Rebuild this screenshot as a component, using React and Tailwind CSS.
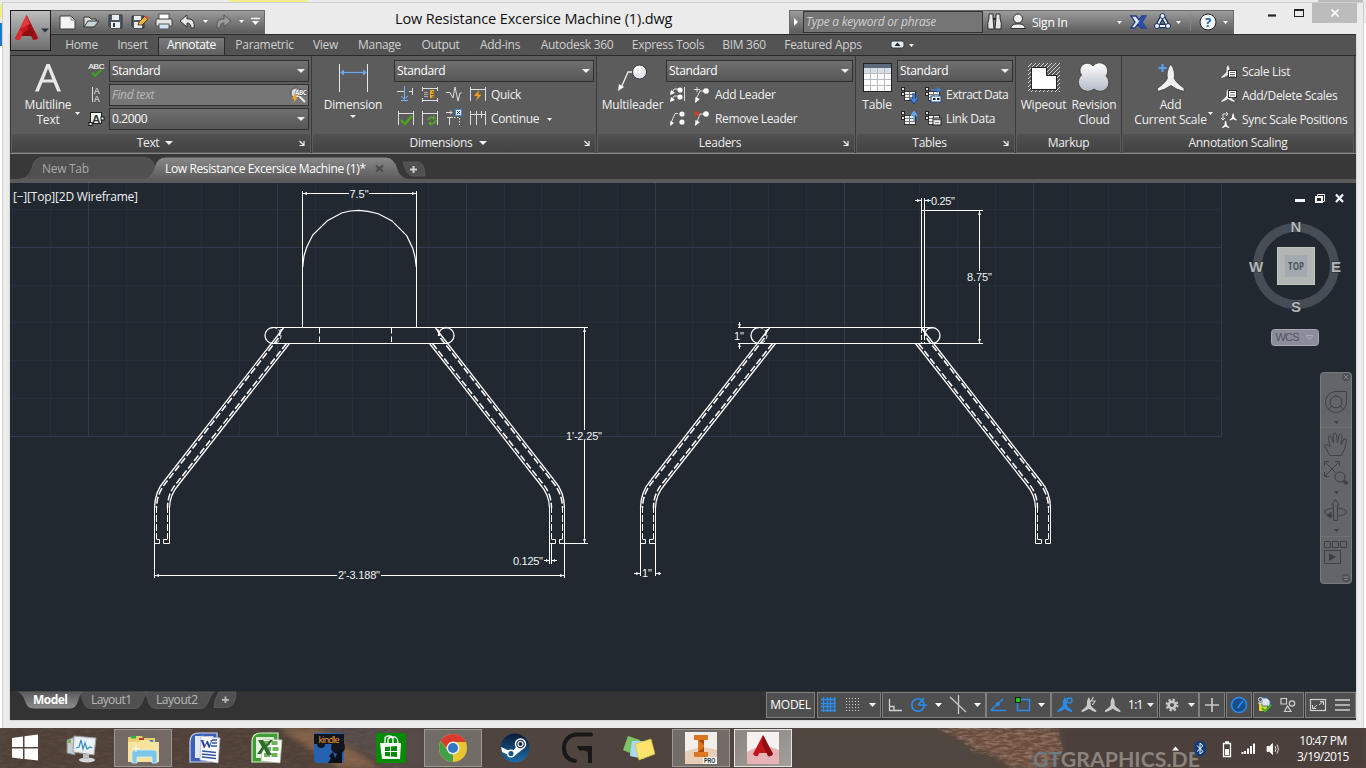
import React from "react";

function Svg({ w, h, className = "", children, vb }) {
  return (
    <svg width={w} height={h} viewBox={vb || `0 0 ${w} ${h}`} fill="none" className={"shrink-0 " + className}>
      {children}
    </svg>
  );
}

function Caret({ c = "#f0f0f0", w = 7, h = 4, className = "" }) {
  return (
    <Svg w={w} h={h} className={className}>
      <path d={`M0 0H${w}L${w / 2} ${h}Z`} fill={c} />
    </Svg>
  );
}

/* ---------- title bar ---------- */

function AppButton() {
  return (
    <div className="relative z-10 flex h-[41px] w-[41px] shrink-0 items-center border border-[#1c1c1c] bg-gradient-to-b from-[#bdbdbd] to-[#6e6e6e]">
      <Svg w={39} h={39}>
        <path d="M15.500 4L4 27.500Q6 29.500 9 28.500L11 24.500H20L22 28.500Q25 29.500 27 27Z" fill="#c8191e" />
        <path d="M15.500 4L27 27Q25 29.500 22 28.500L17 18Z" fill="#a01015" />
        <path d="M15.500 4L9 18L19 13Z" fill="#e2383a" />
        <path d="M10 23L20 17L23 25H11Z" fill="#8e0d12" />
        <path d="M4 27.500L9 19L12 22L9 28.500Q6 29.500 4 27.500Z" fill="#dc2a2e" />
        <path d="M30 17.500H38L34 21.500Z" fill="#2a3440" />
      </Svg>
    </div>
  );
}

function QuickAccess() {
  return (
    <div className="flex h-6 w-[214px] items-center border border-l-0 border-[#6a6a6a] bg-gradient-to-b from-[#9c9c9c] to-[#5c5c5c]">
      <Svg w={212} h={22}>
        <path d="M9 5H20L24 9V18H9Z" fill="#f4f4f4" stroke="#3b3b3b" />
        <path d="M20 5V9H24" stroke="#777" />
        <path d="M33 16V6H38L40 8H45V10" fill="#ddd" stroke="#333" />
        <path d="M33 16L37 10H48L43 16Z" fill="#c9d3da" stroke="#333" />
        <path d="M58 4H71V17H60L58 15Z" fill="#4d5a66" stroke="#333" />
        <rect x="61" y="4" width="7" height="5" fill="#e9edf0" />
        <rect x="60" y="11" width="9" height="6" fill="#e9edf0" />
        <rect x="62" y="12" width="2" height="4" fill="#333" />
        <path d="M81 5H93V17H83L81 15Z" fill="#4d5a66" stroke="#333" />
        <rect x="83" y="5" width="7" height="4" fill="#e9edf0" />
        <rect x="83" y="11" width="8" height="6" fill="#e9edf0" />
        <path d="M87 14L88 11L94 5L97 8L91 14Z" fill="#f1b53b" stroke="#3b2a10" strokeWidth=".8" />
        <path d="M94 5L97 8" stroke="#d8442c" strokeWidth="2" />
        <rect x="108" y="3" width="10" height="6" fill="#fff" stroke="#555" />
        <rect x="105" y="8" width="16" height="7" rx="1" fill="#e5e5e5" stroke="#444" />
        <rect x="108" y="13" width="10" height="5" fill="#cfe3f8" stroke="#555" />
        <path d="M129 10L136 4V8H139Q144 9 143 17H140Q140 12 136 12V16Z" fill="#e8e8e8" stroke="#333" />
        <path d="M152 9H157L154.500 12Z" fill="#fff" />
        <path d="M180 10L173 4V8H170Q165 9 166 17H169Q169 12 173 12V16Z" fill="#9a9a9a" stroke="#555" />
        <path d="M188 9H193L190.500 12Z" fill="#fff" />
        <path d="M200 7.500H209" stroke="#fff" strokeWidth="1.500" />
        <path d="M201 10H208L204.500 14Z" fill="#fff" />
      </Svg>
    </div>
  );
}

function InfoCenter() {
  return (
    <div className="flex h-6 w-[445px] items-center border border-[#6a6a6a] bg-gradient-to-b from-[#9c9c9c] to-[#5c5c5c]">
      <Svg w={13} h={22}><path d="M4 7L8 11L4 15Z" fill="#fff" /></Svg>
      <div className="flex h-[22px] w-[180px] items-center border border-[#333] bg-[#757575] pl-[2px] text-[12px] tracking-[-0.25px] text-[#cfcfcf] italic">Type a keyword or phrase</div>
      <Svg w={48} h={22} className="ml-[3px]">
        <path d="M3 3H7V7L8 18H2Q1 12 3 7Z" fill="#e8e8e8" stroke="#2c2c2c" />
        <path d="M10 3H14V7Q16 12 15 18H9L10 7Z" fill="#e8e8e8" stroke="#2c2c2c" />
        <path d="M7 8H10" stroke="#2c2c2c" strokeWidth="2" />
        <circle cx="32" cy="7.500" r="4.500" fill="#eceef2" stroke="#2c2c2c" />
        <path d="M24.500 17.500Q26 13 30 13H34Q38 13 39.500 17.500Z" fill="#eceef2" stroke="#2c2c2c" />
      </Svg>
      <span className="-ml-[2px] w-[84px] pt-px text-[12px] tracking-[-0.25px] text-white">Sign In</span>
      <Svg w={116} h={22}>
        <path d="M1 10H6L3.500 13Z" fill="#fff" />
        <path d="M15 5H20L23 9L26 5H30L26 11L30 17H25L22 13L19 17H15L19 11Z" fill="#dce6f5" stroke="#203a80" strokeWidth="1.300" />
        <path d="M26 5H30L26 11L30 17H25L22 12Z" fill="#2b4fa8" />
        <path d="M46.500 5L41 15H52Z" stroke="#1c2f66" strokeWidth="4.500" strokeLinejoin="round" />
        <path d="M46.500 5L41 15H52Z" stroke="#eef2fa" strokeWidth="1.800" />
        <g fill="#e8eefc" stroke="#1c2f66"><circle cx="46.500" cy="5" r="2.500" /><circle cx="41" cy="15" r="2.500" /><circle cx="52" cy="15" r="2.500" /></g>
        <path d="M60 10H65L62.500 13Z" fill="#fff" />
        <path d="M74.500 3V20" stroke="#858585" />
        <circle cx="92" cy="11" r="8" fill="#f5f7fb" stroke="#222" />
        <text x="92" y="15.800" textAnchor="middle" fontFamily="Open Sans" fontWeight="700" fontSize="13" fill="#2460b8">?</text>
        <path d="M107 10H112L109.500 13Z" fill="#fff" />
      </Svg>
    </div>
  );
}

function TitleBar() {
  return (
    <div className="flex h-[34px] w-full pt-0 pl-[10px]">
      <div className="mt-[10px] flex">
        <AppButton />
        <QuickAccess />
      </div>
      <div className="mt-[9px] w-[524px] pl-[130px] text-[14.500px] leading-[20px] tracking-[-0.14px] whitespace-nowrap text-[#111]">Low Resistance Excersice Machine (1).dwg</div>
      <div className="mt-[10px]"><InfoCenter /></div>
      <div className="flex h-[23px] flex-1">
        <Svg w={78} h={23}>
          <path d="M34 15.500H42" stroke="#222" strokeWidth="2.200" />
          <rect x="60.500" y="10.500" width="9" height="6" stroke="#222" />
          <path d="M60 10H70" stroke="#222" strokeWidth="2" />
        </Svg>
        <div className="mt-[3px] flex h-5 w-[45px] items-center justify-center bg-[#bcbcbc]">
          <Svg w={8} h={8}><path d="M.5 .5L7.500 7.500M7.500 .5L.5 7.500" stroke="#fff" strokeWidth="1.700" /></Svg>
        </div>
      </div>
    </div>
  );
}

/* ---------- ribbon tabs ---------- */

const TABS = [
  ["Home", "w-[51px]"], ["Insert", "w-[51px]"], ["Annotate", "w-[67px]"], ["Parametric", "w-[79px]"], ["View", "w-[43px]"],
  ["Manage", "w-[65px]"], ["Output", "w-[57px]"], ["Add-ins", "w-[62px]"], ["Autodesk 360", "w-[92px]"],
  ["Express Tools", "w-[90px]"], ["BIM 360", "w-[62px]"], ["Featured Apps", "w-[96px]"],
];

function RibbonTabs() {
  return (
    <div className="flex h-[21px] border-t border-[#2c2c2c] bg-[#535353] pl-[46px] text-[12px] tracking-[-0.3px] text-[#cfcfcf]">
      {TABS.map(([t, w]) => (
        <div key={t} className={`${w} flex shrink-0 justify-center whitespace-nowrap ${t === "Annotate" ? "mt-[2px] h-[19px] border border-b-0 border-[#2a2a2a] bg-gradient-to-b from-[#7a7a7a] to-[#5f5f5f] leading-[14px] text-white" : "leading-[20px]"}`}>{t}</div>
      ))}
      <Svg w={50} h={20} className="ml-[18px]">
        <rect x="2" y="6" width="13" height="7" rx="2" fill="#e8edf2" stroke="#2f3a44" />
        <path d="M5.500 11H11.500L8.500 7.500Z" fill="#222" />
        <path d="M20 9H25L22.500 12Z" fill="#fff" />
      </Svg>
    </div>
  );
}

/* ---------- ribbon panels ---------- */

function Drop({ children, className = "", dim }) {
  return (
    <div className={`flex h-[22px] items-center justify-between border border-[#303030] pl-[2px] text-[12px] tracking-[-0.35px] ${dim ? "bg-[#767676] text-[#b9b9b9] italic" : "bg-gradient-to-b from-[#707070] to-[#575757] pr-[3px] text-white"} ${className}`}>
      <span>{children}</span>
      {dim ? (
        <Svg w={18} h={18}>
          <circle cx="6" cy="7" r="5" fill="#d5dbe2" stroke="#555" />
          <path d="M9 10L15 16" stroke="#eee" strokeWidth="2" />
          <text x="5" y="9" fontSize="6.500" fontFamily="Open Sans" fontWeight="700" fontStyle="normal" textLength="11.500" lengthAdjust="spacingAndGlyphs" fill="#fff" stroke="#444" strokeWidth="1" paintOrder="stroke">ABC</text>
          <path d="M5 8L2 13H4.500L3 17L8 11.500H5.500L7 8Z" fill="#f5a21c" />
        </Svg>
      ) : <Caret w={8} />}
    </div>
  );
}

function Panel({ title, caret, launch, w, children }) {
  return (
    <div className={`${w} flex shrink-0 flex-col border-r border-[#3b3b3b]`}>
      <div className="flex h-[78px] shrink-0 pt-[3px]">{children}</div>
      <div className={`mx-px grid h-[18px] shrink-0 bg-gradient-to-b from-[#515151] to-[#424242] text-[12px] leading-[17px] tracking-[-0.3px] text-[#eeeeee] ${launch ? "grid-cols-[5px_1fr_17px]" : "grid-cols-[20px_1fr_20px]"}`}>
        <span />
        <span className="flex h-[17px] items-center justify-center gap-[6px] whitespace-nowrap">{title}{caret && <Caret w={8} className="mt-px" />}</span>
        {launch ? <Svg w={8} h={8} className="mt-[5px] ml-[5px]"><path d="M1.500 2L5.500 6M6 2V6.500H1.500" stroke="#eee" strokeWidth="1.200" /></Svg> : <span />}
      </div>
    </div>
  );
}

function Big({ w, lines, children }) {
  return (
    <div className={`${w} flex shrink-0 flex-col items-center text-[12px] leading-[15px] tracking-[-0.2px] whitespace-nowrap text-[#f0f0f0]`}>
      <div className="flex h-[38px] items-center">{children}</div>
      {lines.map((l) => <div key={l}>{l}</div>)}
    </div>
  );
}

const Lbl = ({ children, className = "" }) => <span className={"text-[12px] tracking-[-0.36px] whitespace-nowrap text-[#f0f0f0] " + className}>{children}</span>;

function TextPanel() {
  return (
    <Panel title="Text" caret launch w="w-[301px]">
      <Big w="w-[74px]" lines={["Multiline", "Text"]}>
        <Svg w={30} h={32}><path d="M2 29.500L13.500 2H16.700L28 29.500H24.300L20.500 20.500H9.500L5.700 29.500ZM10.800 17.500H19.300L15 6.500Z" fill="#e8e8e8" /></Svg>
      </Big>
      <Svg w={25} h={72} className="-ml-[11px] mr-0"><path d="M1 53H6L3.500 56Z" fill="#fff" /></Svg>
      <Svg w={21} h={72} className="-ml-[11px]">
        <text x="0.500" y="9.500" fontSize="8" fontFamily="Liberation Sans" textLength="16" fill="#f5f5f5" stroke="#f5f5f5" strokeWidth=".2">ABC</text>
        <path d="M4 13.500L7 17L13 11" stroke="#3fa31f" strokeWidth="2.200" />
        <path d="M4.500 28V43" stroke="#e0e0e0" />
        <text x="6" y="34.500" fontSize="8.500" fontFamily="Liberation Sans" fill="#f0f0f0">A</text>
        <text x="6" y="42.500" fontSize="8.500" fontFamily="Liberation Sans" fill="#f0f0f0">A</text>
        <rect x="2.500" y="53.500" width="11" height="11" fill="#f5f5f5" stroke="#222" />
        <text x="4" y="63.500" fontSize="11.500" fontFamily="Liberation Sans" fontWeight="700" fill="#333">A</text>
        <rect x="1" y="63.500" width="3" height="3" fill="#fff" stroke="#111" />
        <rect x="13" y="58" width="3" height="3" fill="#fff" stroke="#111" />
      </Svg>
      <div className="flex w-[200px] flex-col gap-[2px] pt-px">
        <Drop>Standard</Drop>
        <Drop dim>Find text</Drop>
        <Drop>0.2000</Drop>
      </div>
    </Panel>
  );
}

function DimPanel() {
  return (
    <Panel title="Dimensions" caret launch w="w-[285px]">
      <div className="flex w-[82px] flex-col items-center">
        <Big w="w-[83px]" lines={["Dimension"]}>
          <Svg w={30} h={30}>
            <path d="M1.500 1V29M29.500 1V29" stroke="#e8e8e8" />
            <path d="M3 9.500H27" stroke="#6ba5f2" strokeWidth="1.200" />
            <path d="M2 9.500L6 6.500V12.500ZM29 9.500L25 6.500V12.500Z" fill="#6ba5f2" />
          </Svg>
        </Big>
        <Caret w={6} h={3} className="mt-[3px]" />
      </div>
      <div className="flex w-[200px] flex-col pt-px">
        <Drop>Standard</Drop>
        <div className="flex h-6 items-center pt-[2px]">
          <Svg w={94} h={22}>
            <path d="M3 7.500H10M15 7.500H18M18.500 4V11" stroke="#ddd" />
            <path d="M10.500 2V15M7 16.500H14M7 12L10.500 15L14 12" stroke="#7aaefa" />
            <path d="M28.500 3V7M43.500 3V7M28 4.500H44M28.500 14V18M43.500 14V18M28 16.500H44" stroke="#ddd" />
            <path d="M36 6H40V14H36Z" fill="#e9a820" /><path d="M30 8.500H34M30 10.500H34M30 12.500H34" stroke="#aaa" /><path d="M38 8H40M37 10.500H40M38 13H40" stroke="#6b4400" />
            <path d="M52 8.500H56L59 14L61 3L64 17L66 9H67.500" stroke="#ddd" />
            <path d="M76.500 3V17M91.500 3V17M76 5.500H92" stroke="#ddd" />
            <path d="M85 6L80 12H83.500L82 17L87.500 10.500H84.500Z" fill="#f79a1f" />
          </Svg>
          <Lbl className="ml-[3px]">Quick</Lbl>
        </div>
        <div className="flex h-6 items-center pt-[2px]">
          <Svg w={94} h={22}>
            <path d="M4.500 3V17M19.500 3V17M5 5.500H20M28.500 3V17M43.500 3V17M28 5.500H44" stroke="#ddd" />
            <path d="M7 12L11 16L18 8" stroke="#4fa51e" strokeWidth="2.400" />
            <path d="M34 12Q36 8 40 10M42 12Q40 17 36 15" stroke="#57a52a" strokeWidth="1.800" /><path d="M39 7V12L42 10ZM37 18V13L34 15Z" fill="#57a52a" />
            <path d="M52 4.500H58M56 2.500L58 4.500L56 6.500M53 9.500H59M55.500 9V17" stroke="#ddd" /><path d="M60 9.500H65.500V17" stroke="#ddd" strokeDasharray="1.500 1.500" />
            <rect x="61.500" y="1.500" width="6" height="6" fill="#e6f0fb" stroke="#4286d8" /><path d="M63 3L66 6M66 3L63 6" stroke="#333" />
            <path d="M76.500 3V17M82.500 3V17M91.500 3V17M76 6.500H92M87.500 3V10" stroke="#ddd" />
          </Svg>
          <Lbl className="ml-[3px]">Continue</Lbl>
          <Caret w={5} h={3} className="ml-2" />
        </div>
      </div>
    </Panel>
  );
}

function LeaderPanel() {
  return (
    <Panel title="Leaders" launch w="w-[259px]">
      <div className="pl-[2px]">
        <Big w="w-[67px]" lines={["Multileader"]}>
          <Svg w={32} h={32}>
            <path d="M4 26L11 10H18" stroke="#eee" strokeWidth="1.300" />
            <path d="M1 29L2 22L7 25Z" fill="#fff" />
            <circle cx="22.500" cy="10" r="7" fill="#e4e8ee" stroke="#3d3d3d" />
            <circle cx="21" cy="8" r="3.500" fill="#fafbfd" />
          </Svg>
        </Big>
      </div>
      <div className="flex w-[187px] flex-col pt-px">
        <Drop>Standard</Drop>
        <div className="flex h-6 items-center pt-[2px]">
          <Svg w={44} h={20}>
            <path d="M6 8L8 4H13M6 15L8 11H13M18.500 2V16" stroke="#ddd" />
            <path d="M4 10L5 5L9 8ZM4 17L5 12L9 15Z" fill="#fff" />
            <circle cx="14" cy="5" r="2.600" fill="#fff" /><circle cx="14" cy="12" r="2.600" fill="#fff" />
            <path d="M30 14L34 6H38M28 4.500H34M31 2V7" stroke="#ddd" /><path d="M29 18L29.500 12L34 14Z" fill="#fff" /><circle cx="40" cy="6" r="2.800" fill="#fff" />
          </Svg>
          <Lbl className="ml-[5px]">Add Leader</Lbl>
        </div>
        <div className="flex h-6 items-center pt-[2px]">
          <Svg w={44} h={20}>
            <path d="M5 14L9 4.500H12" stroke="#ddd" /><path d="M4 17L4.500 12L8 14Z" fill="#fff" />
            <circle cx="16" cy="5" r="2.600" fill="#fff" /><circle cx="16" cy="13" r="2.600" fill="#fff" />
            <path d="M31 13L34 5H38" stroke="#ddd" /><path d="M29 17L29.500 11L34 13Z" fill="#fff" /><circle cx="40" cy="5" r="2.800" fill="#fff" />
            <path d="M28.500 2.500L33 7M33 2.500L28.500 7" stroke="#e0371d" strokeWidth="1.500" />
          </Svg>
          <Lbl className="ml-[5px]">Remove Leader</Lbl>
        </div>
      </div>
    </Panel>
  );
}

function MiniTable({ x, y }) {
  return (
    <g>
      <rect x={x + 3.500} y={y + 4.500} width="11" height="9" fill="#efefef" stroke="#333" />
      <path d={`M${x + 4} ${y + 7.500}H${x + 14}M${x + 4} ${y + 10.500}H${x + 14}M${x + 8.500} ${y + 5}V${y + 13}`} stroke="#777" />
      <rect x={x + 0.500} y={y + 0.500} width="3" height="3" fill="#ddd" stroke="#222" />
      <rect x={x + 0.500} y={y + 5.500} width="3" height="3" fill="#ddd" stroke="#222" />
    </g>
  );
}

function TablePanel() {
  return (
    <Panel title="Tables" launch w="w-[160px]">
      <div className="pl-px">
        <Big w="w-[40px]" lines={["Table"]}>
          <Svg w={29} h={30}>
            <rect x=".5" y=".5" width="28" height="28" fill="#fdfdfd" stroke="#222" />
            <rect x="1" y="1" width="27" height="4" fill="#5b6a7c" />
            <rect x="1" y="5" width="27" height="5" fill="#d9dee5" />
            <path d="M7.500 5V28M14.500 5V28M21.500 5V28M1 10.500H28M1 16.500H28M1 22.500H28" stroke="#b8bcc2" />
          </Svg>
        </Big>
      </div>
      <div className="flex w-[116px] flex-col pt-px">
        <Drop>Standard</Drop>
        <div className="flex h-6 items-center pt-[2px]">
          <Svg w={46} h={18}>
            <MiniTable x={4} y={1} /><path d="M17 7V15M14 12L17 16L20 12" stroke="#1d3f78" strokeWidth="3.200" /><path d="M17 7V15M14 12L17 16L20 12" stroke="#4c8be0" strokeWidth="1.500" />
            <MiniTable x={28} y={1} /><rect x="34" y="10" width="10" height="6" fill="#eef4fb" stroke="#1c4f96" /><path d="M36 13H38.500M40 13H42.500" stroke="#123" strokeWidth="2" /><path d="M34 4H42M40 1.500L43 4L40 6.500" stroke="#3f7fd6" strokeWidth="1.600" />
          </Svg>
          <Lbl className="ml-[3px]"><span className="tracking-[-0.5px]">Extract Data</span></Lbl>
        </div>
        <div className="flex h-6 items-center pt-[2px]">
          <Svg w={46} h={18}>
            <MiniTable x={4} y={1} /><path d="M17 11V3M14 6L17 2L20 6" stroke="#64a8fa" strokeWidth="1.800" />
            <MiniTable x={28} y={1} /><rect x="36" y="8" width="8" height="7" fill="#f4f4f4" stroke="#222" /><path d="M36 9.500H44" stroke="#555" strokeWidth="1.500" /><path d="M38 12.500H42" stroke="#777" />
          </Svg>
          <Lbl className="ml-[3px]">Link Data</Lbl>
        </div>
      </div>
    </Panel>
  );
}

function MarkupPanel() {
  return (
    <Panel title="Markup" w="w-[106px]">
      <Big w="w-[55px]" lines={["Wipeout"]}>
        <Svg w={32} h={30}>
          <defs><pattern id="hatch" width="4" height="4" patternUnits="userSpaceOnUse"><path d="M0 4L4 0M-1 1L1 -1M3 5L5 3" stroke="#dcdcdc" strokeWidth=".9" /></pattern></defs>
          <rect width="32" height="29" fill="url(#hatch)" />
          <path d="M3.500 4.500H18.500V12.500H28.500V26.500H3.500Z" fill="#fff" stroke="#222" />
        </Svg>
      </Big>
      <Big w="w-[46px]" lines={["Revision", "Cloud"]}>
        <Svg w={32} h={32}>
          <defs><linearGradient id="cloud" x1="0" y1="0" x2="0" y2="1"><stop offset="0" stopColor="#fff" /><stop offset="1" stopColor="#b4bac6" /></linearGradient></defs>
          <path d="M3.500 13A7 7 0 1 1 15 4A7.500 7.500 0 0 1 28 14A8 8 0 1 1 16 27A7.500 7.500 0 1 1 3.500 13Z" fill="url(#cloud)" stroke="#3a3a3a" strokeWidth=".8" />
        </Svg>
      </Big>
    </Panel>
  );
}

const SCALE = "M7 0Q9.600 3.800 8.800 7.600Q9.600 9.600 14 12.800V14.500Q10 13.600 7 11.300Q4 13.600 0 14.500V12.800Q4.400 9.600 5.200 7.600Q4.400 3.800 7 0Z";

function ScalePanel() {
  return (
    <Panel title="Annotation Scaling" w="w-[233px]">
      <div className="pl-px">
        <Big w="w-[95px]" lines={["Add", "Current Scale"]}>
          <Svg w={30} h={32}>
            <path d={SCALE} transform="translate(1.500 2) scale(1.900)" fill="#f0f0f0" stroke="#3a3a3a" strokeWidth=".4" />
            <path d="M6.500 2V10M2.500 6H10.500" stroke="#5a9ef0" strokeWidth="2.200" />
          </Svg>
        </Big>
      </div>
      <Svg w={5} h={72} className="-ml-[10px]"><path d="M0 53H5L2.500 56Z" fill="#fff" /></Svg>
      <div className="flex flex-col pt-px pl-[7px]">
        {["Scale List", "Add/Delete Scales", "Sync Scale Positions"].map((t, i) => (
          <div key={t} className="flex h-6 items-center gap-[4px] pb-[1px]">
            <Svg w={18} h={18}>
              {i < 2 ? (
                <>
                  <path d={SCALE} transform="translate(1 1)" fill="#e8e8e8" stroke="#333" strokeWidth=".5" />
                  <rect x="8.500" y={i ? 3.500 : 7.500} width="8" height="7" fill="#fff" stroke="#333" />
                  <path d={i ? "M10 5.500H15M10 8H15" : "M10 9.500H15M10 11.500H15M10 13.200H15"} stroke="#444" strokeWidth=".8" />
                </>
              ) : (
                <>
                  <path d="M3 9V3H8M6 1L8 3L6 5M1 7L3 9L5 7" stroke="#ddd" />
                  <path d={SCALE} transform="translate(9.500 2) scale(.52)" fill="#fff" />
                  <path d={SCALE} transform="translate(2 9.500) scale(.52)" fill="#fff" />
                </>
              )}
            </Svg>
            <Lbl><span className="tracking-[-0.3px]">{t}</span></Lbl>
          </div>
        ))}
      </div>
    </Panel>
  );
}

/* ---------- document tabs ---------- */

function DocTabs() {
  return (
    <div className="flex h-[29px] flex-col bg-[#383838]">
      <div className="flex h-[25px] items-end">
        <svg width="440" height="22" viewBox="10 157 440 22" fill="none">
          <defs><linearGradient id="dt" x1="0" y1="0" x2="0" y2="1"><stop offset="0" stopColor="#888" /><stop offset="1" stopColor="#5d5d5d" /></linearGradient></defs>
          <path d="M20 179Q29 178 32 168Q34 157.500 42 157.500H144Q152 157.500 154 165L158 179Z" fill="#505050" stroke="#666" strokeWidth=".6" />
          <path d="M145 179Q152 177 155 167Q157 157.500 166 157.500H386Q394 158 397 168Q399 177 408 179Z" fill="url(#dt)" />
          <path d="M403 162H418Q425 163 425 176H412Q406 174 403 162Z" fill="#505050" stroke="#666" strokeWidth=".6" />
          <path d="M413.500 166V173M410 169.500H417" stroke="#ccc" strokeWidth="2" />
          <path d="M376 165.500L383 171.500M383 165.500L376 171.500" stroke="#4a4a4a" strokeWidth="2" />
          <text x="42" y="173" fontFamily="Open Sans" fontSize="12" textLength="47" fill="#a8a8a8">New Tab</text>
          <text x="165" y="173" fontFamily="Open Sans" fontSize="12" textLength="201" fill="#fff">Low Resistance Excersice Machine (1)*</text>
        </svg>
      </div>
      <div className="h-1 bg-[#5a5a5a]" />
    </div>
  );
}

/* ---------- drawing ---------- */

const MINOR_X = [], MAJOR_X = [], MINOR_Y = [], MAJOR_Y = [];
for (let i = -2; i <= 30; i++) (i % 5 === 0 ? MAJOR_X : MINOR_X).push(Math.floor(88.5 + i * 37.78) + 0.5);
for (let i = -1; i <= 5; i++) (i % 5 === 0 ? MAJOR_Y : MINOR_Y).push(Math.floor(247.3 + i * 37.8) + 0.5);

function Leg() {
  return (
    <g>
      <g strokeWidth="1.250">
        <path d="M283.500 328L165 480Q154.500 492 154.500 508M289.500 343.500L179.500 483.500Q169.500 495 169.500 508" />
        <path d="M281.500 329L278.500 338L168 480Q156.500 493 156.500 508M286.500 343.500L177.500 482Q167.500 493 167.500 508" strokeDasharray="7 2.500" strokeWidth="1.500" />
      </g>
      <path d="M154.500 506V543.500M169.500 506V543.500" />
      <path d="M156.500 506V539M167.500 506V539" strokeDasharray="7 2" />
      <path d="M154.500 543.500H159.500V539.500H156.500M169.500 543.500H163.500V539.500H167.500" />
    </g>
  );
}

function Frame() {
  return (
    <g>
      <Leg />
      <g transform="translate(719 0) scale(-1 1)"><Leg /></g>
      <path d="M273 327.500A8 8 0 0 0 273 343.500M446 327.500A8 8 0 0 1 446 343.500M446 327.500A8 8 0 0 0 438.500 336" strokeWidth="1.300" />
      <path d="M273 327.500A8 8 0 0 1 273 343.500" strokeDasharray="4 2" />
    </g>
  );
}

function Drawing() {
  const t = { fontFamily: "Liberation Sans", fontSize: 11, fill: "#f2f2f2", stroke: "none", textAnchor: "middle" };
  return (
    <svg width="1346" height="508" viewBox="10 183 1346 508" fill="none" className="block">
      <g stroke="#262e39">
        {MINOR_X.map((x) => <path key={x} d={`M${x} 183V436`} />)}
        {MINOR_Y.map((y) => <path key={y} d={`M10 ${y}H1221`} />)}
      </g>
      <g stroke="#323a4e">
        {MAJOR_X.map((x) => <path key={x} d={`M${x} 183V437`} />)}
        {MAJOR_Y.map((y) => <path key={y} d={`M10 ${y}H1222`} />)}
      </g>
      <g stroke="#ffffff" strokeWidth="1">
        <Frame />
        <g transform="translate(486 0)"><Frame /></g>
        <path d="M302.500 191V327M416.500 191V327" />
        <path d="M302.700 267L304 256L306.700 247.300L312.700 235L327.300 220.700L341.700 213L350 211L359 210.400L368 211.300L378.300 213.700L391.700 220.700L406.700 235.700L412.700 248.300L415 257L416.300 267" strokeWidth="1.200" />
        <path d="M272 327.500H588M272 343.500H447" />
        <path d="M319.500 328V343M391.500 328V343" strokeDasharray="5.500 3" />
        <path d="M303 193.500H349M369 193.500H416M584.500 328V430M584.500 440V543M565 543.500H588M154.500 543V578M564.500 543V578M155 575.500H337M381 575.500H564" />
        <path d="M549.500 543V564M551.500 543V564M544 560.500H549M552 560.500H557" />
        <path d="M640.500 543V576M655.500 543V576M634 573.500H640M656 573.500H661" />
        <path d="M738 327.500H933M738 343.500H983M739.500 322V327M739.500 344V349" />
        <path d="M921.500 198V328M924.500 198V328M922 210.500H983M979.500 211V271M979.500 283V343M915 200.500H921M925 200.500H931" />
        <path d="M921.500 328V343M924.500 328V343" strokeDasharray="5 2" />
      </g>
      <g fill="#f4f4f4">
        <path d="M303 193.500L307 192V195ZM416 193.500L412 192V195ZM584.500 328L583 332H586ZM584.500 543L583 539H586ZM155 575.500L159 574V577ZM564 575.500L560 574V577Z" />
        <path d="M979.500 211L978 215H981ZM979.500 343L978 339H981ZM921 200.500L917 199V202ZM925 200.500L929 199V202ZM640 573.500L636 572V575ZM656 573.500L660 572V575ZM549 560.500L546 559V562ZM552 560.500L555 559V562ZM739.500 327L738 324H741ZM739.500 344L738 347H741Z" />
      </g>
      <g {...t}>
        <text x="359" y="198">7.5"</text>
        <text x="584" y="440" textLength="36">1'-2.25"</text>
        <text x="528" y="565" textLength="30">0.125"</text>
        <text x="359" y="579" textLength="42">2'-3.188"</text>
        <text x="647" y="577">1"</text>
        <text x="739" y="340">1"</text>
        <text x="943" y="205" textLength="24">0.25"</text>
        <text x="979.500" y="281" textLength="25">8.75"</text>
      </g>
      <text x="13" y="201" fontFamily="Open Sans" fontSize="12" textLength="125" fill="#f0f0f0">[−][Top][2D Wireframe]</text>
    </svg>
  );
}

function ViewControls() {
  return (
    <div className="absolute top-0 right-0 flex w-[112px] flex-col">
      <svg width="112" height="175" viewBox="1244 183 112 175" fill="none">
        <path d="M1295 200.500H1305" stroke="#f4f4f4" strokeWidth="3" />
        <path d="M1317.500 196.500V194.500H1324.500V201.500H1323" stroke="#f4f4f4" />
        <rect x="1316" y="197" width="6" height="5" stroke="#f4f4f4" strokeWidth="2" />
        <path d="M1336 194.500L1343 202M1343 194.500L1336 202" stroke="#f4f4f4" strokeWidth="2.300" />
        <circle cx="1296" cy="266" r="38.500" stroke="#464d55" strokeWidth="9" />
        <rect x="1277.500" y="247.500" width="37" height="37" fill="#b3b5b5" stroke="#c3c5bf" />
        <rect x="1285" y="255" width="22" height="22" fill="#a2a9af" />
        <text x="1296" y="270" textAnchor="middle" fontFamily="Open Sans" fontWeight="700" fontSize="10.500" textLength="16" lengthAdjust="spacingAndGlyphs" fill="#4b545d">TOP</text>
        <g fontFamily="Liberation Sans" fontWeight="700" fontSize="15" textAnchor="middle" fill="#b4b6b8" stroke="#212830" strokeWidth=".8" paintOrder="stroke">
          <text x="1296" y="231.500">N</text><text x="1296" y="311.500">S</text><text x="1256" y="271.500">W</text><text x="1336" y="271.500">E</text>
        </g>
        <rect x="1271.500" y="329.500" width="47" height="16" rx="3" fill="#8b8d9b" stroke="#a6a8b4" />
        <text x="1275.500" y="341" fontFamily="Liberation Sans" fontSize="11" textLength="24" fill="#50535e">WCS</text>
        <path d="M1306 335.500H1313L1309.500 339.500Z" stroke="#a9abb6" />
      </svg>
      <svg width="32" height="212" viewBox="1320 372 32 212" fill="none" className="mt-[14px] ml-[76px]" stroke="#3c4146">
        <rect x="1320.500" y="372.500" width="31" height="211" rx="3" fill="#62666b" stroke="#777b7e" />
        <circle cx="1346" cy="377" r="4" fill="#4c5156" stroke="none" /><path d="M1344 375L1348 379M1348 375L1344 379" stroke="#85898c" />
        <path d="M1346.500 391.500V402A10.500 10.500 0 1 1 1336 391.500ZM1328 409.500L1332 406M1344 409.500L1340 406" /><circle cx="1336" cy="402" r="6" />
        <path d="M1334 421H1339L1336.500 424ZM1334 491H1339L1336.500 494ZM1334 529H1339L1336.500 532Z" fill="#3c4146" stroke="none" />
        <path d="M1321 427.500H1351M1321 536.500H1351" stroke="#6f7376" />
        <path d="M1330 455.500L1324.500 446Q1326 443 1330 447L1328.500 438Q1329 434 1331.500 437L1333.500 443L1333 435Q1335 431 1336.500 435L1337.500 443L1339 435Q1341 432 1342 436L1341 445L1344 439Q1347 438 1346.500 441Q1345 450 1341.500 455.500Z" />
        <path d="M1325 462L1339 476M1339 462L1325 476M1324.500 466V461.500H1329M1335 461.500H1339.500V466M1324.500 472V476.500H1329" /><circle cx="1340" cy="477" r="5" fill="#62666b" /><path d="M1343.500 480.500L1347.500 484" strokeWidth="3" />
        <ellipse cx="1335.500" cy="512" rx="11" ry="4" /><path d="M1333.500 520.500V505H1331.500L1335.500 499.500L1339 505H1337.500V520.500Z" fill="#62666b" /><path d="M1327 515.500L1331 512V518Z" fill="#3c4146" />
        <path d="M1324.500 541.500H1330.500V547.500H1324.500ZM1332.500 541.500H1338.500V547.500H1332.500ZM1340.500 541.500H1346.500V547.500H1340.500ZM1324.500 550.500H1340.500V563.500H1324.500Z" /><path d="M1329 553V561L1336 557Z" fill="#3c4146" stroke="none" />
        <circle cx="1346" cy="578" r="4" fill="#4c5156" stroke="none" /><path d="M1343.500 577H1348.500M1344.500 579.500H1347.500" stroke="#85898c" />
      </svg>
    </div>
  );
}

/* ---------- layout tabs and status bar ---------- */

function LayoutTabs() {
  return (
    <svg width="250" height="29" viewBox="10 691 250 29" fill="none">
      <defs><linearGradient id="lt" x1="0" y1="0" x2="0" y2="1"><stop offset="0" stopColor="#5a5a5a" /><stop offset="1" stopColor="#8d8d8d" /></linearGradient></defs>
      <g fill="#505050" stroke="#666" strokeWidth=".6">
        <path d="M143 692H214Q211 694 208.500 701Q206 708.500 201 708.500H156Q150 708.500 148 701Q146 693 143 692Z" />
        <path d="M78 692H148Q145 694 142.500 701Q140 708.500 135 708.500H91Q85 708.500 83 701Q81 693 78 692Z" />
        <path d="M219 692H236Q236 706 227 707.500H214Q214 699 219 692Z" />
      </g>
      <path d="M16 691.500H83Q80 694 78 701Q76 708.500 70 708.500H34Q27 708.500 25 701Q22 692 16 691.500Z" fill="url(#lt)" />
      <path d="M225.500 696.500V703M222 699.800H229" stroke="#bbb" strokeWidth="1.800" />
      <g fontFamily="Open Sans" fontSize="12">
        <text x="33" y="704" fontWeight="700" textLength="35" fill="#fff">Model</text>
        <text x="91" y="704" textLength="41" fill="#b8b8b8">Layout1</text>
        <text x="156" y="704" textLength="42" fill="#b8b8b8">Layout2</text>
      </g>
    </svg>
  );
}

const Grp = ({ w, children }) => <div className={`${w} flex h-[26px] shrink-0 items-center overflow-hidden border border-[#808080] bg-[#4f4f4f]`}>{children}</div>;
const B = "#2a8cf0";

function StatusBar() {
  return (
    <div className="flex h-[29px] justify-between bg-[#333]">
      <LayoutTabs />
      <div className="flex items-start pt-px">
        <Grp w="w-[49px]"><span className="w-full text-center text-[12px] tracking-[-0.3px] text-white">MODEL</span></Grp>
        <div className="w-[2px]" />
        <Grp w="w-[64px]">
          <Svg w={62} h={24} vb="818 693 62 24">
            <path d="M823.500 697V712M827.500 697V712M830.500 697V712M834.500 697V712M821 699.500H836M821 703.500H836M821 706.500H836M821 710.500H836" stroke={B} strokeWidth="1.300" />
            <path d="M846 698.500H860M846 701.500H860M846 704.500H860M846 707.500H860M846 710.500H860" stroke="#d0d0d0" strokeDasharray="1 2" />
            <path d="M869 703H876L872.500 707Z" fill="#fff" />
          </Svg>
        </Grp>
        <div className="w-px" />
        <Grp w="w-[104px]">
          <Svg w={102} h={24} vb="883 693 102 24">
            <path d="M889.500 699V710.500H902M890 706.500H894V710" stroke="#d0d0d0" strokeWidth="1.300" />
            <circle cx="918" cy="705" r="6.200" stroke={B} strokeWidth="1.600" /><path d="M918 705H927M918 705L924 698" stroke={B} strokeWidth="1.600" />
            <path d="M935 703H942L938.500 707ZM974 703H981L977.500 707Z" fill="#fff" />
            <path d="M950 697L966 712M958.500 695V714" stroke="#c8c8c8" strokeWidth="1.300" />
          </Svg>
        </Grp>
        <Grp w="w-[65px]">
          <Svg w={63} h={24} vb="987 693 63 24">
            <path d="M991 710.500H1006M991 710L1003 699" stroke={B} strokeWidth="1.500" /><circle cx="998" cy="704" r="2" fill={B} />
            <rect x="1017.500" y="699.500" width="12" height="11" stroke={B} strokeWidth="1.500" />
            <rect x="1015.500" y="697.500" width="5" height="5" fill="#21c321" stroke="#0b280b" />
            <path d="M1038 703H1045L1041.500 707Z" fill="#fff" />
          </Svg>
        </Grp>
        <Grp w="w-[107px]">
          <Svg w={75} h={24} vb="1051 693 75 24">
            <path d={SCALE} transform="translate(1056.500 697) scale(1.050)" fill={B} /><circle cx="1068.500" cy="700.500" r="2.500" stroke={B} strokeWidth="1.300" />
            <path d={SCALE} transform="translate(1080.500 697) scale(1.050)" fill="#c8c8c8" /><path d="M1092.500 697L1090 701H1094L1091.500 705" stroke="#c8c8c8" strokeWidth="1.200" />
            <path d={SCALE} transform="translate(1104 697) scale(1.100 1.050)" fill="#c8c8c8" />
          </Svg>
          <span className="ml-px text-[12px] tracking-[-0.7px] text-white">1:1</span>
          <Caret w={7} className="ml-[4px]" />
        </Grp>
        <div className="w-px" />
        <Grp w="w-[40px]">
          <Svg w={38} h={24} vb="1160 693 38 24">
            <circle cx="1172" cy="705" r="5.200" stroke="#c8c8c8" strokeWidth="2.500" strokeDasharray="2.200 1.880" /><circle cx="1172" cy="705" r="3.300" stroke="#c8c8c8" strokeWidth="2.600" />
            <path d="M1188 703H1195L1191.500 707Z" fill="#fff" />
          </Svg>
        </Grp>
        <Grp w="w-[26px]"><Svg w={24} h={24}><path d="M12 5V19M5 12H19" stroke="#c8c8c8" strokeWidth="1.700" /></Svg></Grp>
        <div className="w-px" />
        <Grp w="w-[26px]"><Svg w={24} h={24}><circle cx="12" cy="12" r="7.500" fill="#164e8a" stroke={B} strokeWidth="1.500" /><path d="M12 13L16 8" stroke={B} strokeWidth="1.500" /><circle cx="11.500" cy="14" r="1.200" fill={B} /></Svg></Grp>
        <div className="w-px" />
        <Grp w="w-[51px]">
          <Svg w={49} h={24} vb="1254 693 49 24">
            <rect x="1259" y="703" width="8" height="8" fill="#e8d91c" /><path d="M1262 698H1267L1270 701V706H1262Z" fill="#dce6f0" stroke="#3f77b5" />
            <circle cx="1260.500" cy="699.500" r="2" stroke="#e5e5e5" /><path d="M1258 703H1263" stroke="#eee" />
            <path d="M1262 708L1265 711L1271 705" stroke="#46ad27" strokeWidth="2" />
            <path d="M1281 698.500H1286.500V704H1281ZM1284.500 711.500L1287.500 706L1291 711.500Z" stroke="#d0d0d0" strokeWidth="1.200" /><circle cx="1292" cy="703.500" r="2.700" stroke="#d0d0d0" strokeWidth="1.200" />
          </Svg>
        </Grp>
        <div className="w-px" />
        <Grp w="w-[51px]">
          <Svg w={49} h={24} vb="1306 693 49 24">
            <rect x="1310.500" y="699.500" width="15" height="11" stroke="#d0d0d0" strokeWidth="1.200" /><path d="M1319 705L1323 701.500M1323.500 705V701.500H1320M1317 705L1313 708.500M1312.500 705V708.500H1316" stroke="#d8d8d8" />
            <path d="M1335 700H1350M1335 705H1350M1335 710H1350" stroke="#d0d0d0" strokeWidth="1.600" />
          </Svg>
        </Grp>
      </div>
    </div>
  );
}

/* ---------- taskbar ---------- */

function Slot({ state, children }) {
  return (
    <div className="flex w-[62px] shrink-0 justify-center">
      <div className={`flex h-[38px] w-[58px] items-center justify-center ${state === "open" ? "border border-[#9c9792] bg-[#7b7570]/80" : state === "active" ? "border border-[#e6e4e2] bg-gradient-to-br from-[#8b8681] to-[#a39e9a]" : ""}`}>
        <Svg w={32} h={32}>{children}</Svg>
      </div>
    </div>
  );
}

function Taskbar() {
  return (
    <div className="relative flex h-10 w-full items-start overflow-hidden bg-[#50453e] pt-px">
      <svg width="1366" height="40" viewBox="0 0 1366 40" className="absolute inset-0">
        <defs>
          <filter id="soft"><feGaussianBlur stdDeviation="3" /></filter>
          <filter id="grain" x="0" y="0" width="100%" height="100%"><feTurbulence type="fractalNoise" baseFrequency=".12 .4" numOctaves="3" /><feColorMatrix values="0 0 0 0 .5  0 0 0 0 .35  0 0 0 0 .27  1.600 0 0 0 -.6" /></filter>
          <clipPath id="rock"><path d="M935 0H1058L1063 22L1055 40H1010Q1000 28 972 24Q965 12 935 0Z" /></clipPath>
        </defs>
        <g filter="url(#soft)">
          <path d="M0 0H300L420 40H0Z" fill="#4f4139" />
          <path d="M280 0H318L380 40H340Z" fill="#82604a" />
          <path d="M318 0H424V40H395Z" fill="#554c48" />
          <path d="M790 0H940L1000 40H790Z" fill="#50463f" />
          <path d="M940 0H1056L1062 20L1050 40H1010Q1000 28 975 22Q965 12 940 0Z" fill="#6b4d3e" />
          <path d="M1062 0H1366V40H1068Z" fill="#4c413b" />
        </g>
        <rect x="930" width="140" height="40" filter="url(#grain)" clipPath="url(#rock)" opacity=".75" />
        <rect x="0" width="400" height="40" filter="url(#grain)" opacity=".15" />
        <text x="1033" y="39" fontFamily="Lato" fontWeight="700" fontSize="21.500" textLength="167" lengthAdjust="spacingAndGlyphs" fill="#8b837d"><tspan fill="#6f7c84">GT</tspan>GRAPHICS.DE</text>
      </svg>
      <div className="relative flex flex-1 items-start">
        <Svg w={50} h={38}><path d="M12 9L23 7.500V18H12ZM24.500 7.300L38 5.500V18H24.500ZM12 19.500H23V30L12 28.500ZM24.500 19.500H38V31.500L24.500 30Z" fill="#fff" /></Svg>
        <Slot>
          <path d="M2 8L10 5V23L2 21Z" fill="#c9ccd0" stroke="#80848a" /><rect x="3" y="8" width="3" height="3" fill="#6db93a" />
          <path d="M9 4L31 6L29 23L8 20Z" fill="#e8eaec" stroke="#9a9da2" /><path d="M11.500 6.500L28.500 8L27 20L10.500 18Z" fill="#eaf5fc" />
          <path d="M11 16L14 15L16 8L18 17L20 11L22 17L25 15L27 16" stroke="#3a8cc5" strokeWidth="1.200" /><ellipse cx="22" cy="28" rx="8" ry="2.500" fill="#d5d7da" /><path d="M18 22H24V27H18Z" fill="#b9bcc0" />
        </Slot>
        <Slot state="open">
          <path d="M1 5H7L8 4H15L16 6H28V28H1Z" fill="#e9cd72" /><rect x="4" y="4" width="5" height="2.500" fill="#2fae3d" /><rect x="12" y="6" width="5" height="2" fill="#c23a2a" /><rect x="20" y="8" width="6" height="2" fill="#3387c9" />
          <path d="M1 10H12L14 8H22L24 10H32V30H1Z" fill="#f8e49c" /><path d="M5 31V21Q5 18 9 18H26Q30 18 30 21V31H25V25H10V31Z" fill="#7fc5e8" stroke="#d2eefb" strokeWidth=".8" /><path d="M9 13V20M5.500 16.500H12.500" stroke="#fff" opacity=".8" />
        </Slot>
        <Slot>
          <path d="M1 30V10Q1 1 10 1H28V23Q28 30 20 30Z" fill="#3c5eb4" stroke="#c9d5f2" strokeWidth="1.200" /><path d="M6 4H24V26H6Z" fill="#dfe7f8" /><path d="M12 4L31 6L29 31L11 28Z" fill="#fff" stroke="#aab6d5" strokeWidth=".8" />
          <text x="11" y="16" fontFamily="Liberation Serif" fontWeight="700" fontSize="13" fill="#233f94">W</text><path d="M23 8H28M23 11H28M22 14H28M13 19L27 20.500M13 22L27 23.500M13 25L27 26.500" stroke="#34559f" strokeWidth="1.700" />
        </Slot>
        <Slot>
          <path d="M1 30V10Q1 1 10 1H27V23Q27 30 20 30Z" fill="#3e9e33" stroke="#d5efcb" strokeWidth="1.200" /><path d="M5 5H23V26H5Z" fill="#e3f3db" /><path d="M12 7L31 8L29 31L10 29Z" fill="#fff" stroke="#9fca94" strokeWidth=".8" />
          <path d="M13 11H28M14 17H29M13 23H28" stroke="#6db35c" strokeWidth="3.800" strokeDasharray="6 1.500" /><path d="M7 8H12L15 13L19 8H22L16 15L21 23H16L13 17L10 22H6L11 15Z" fill="#2d6c2b" />
        </Slot>
        <Slot>
          <rect x="1" y="1" width="30" height="30" rx="3" fill="#2563b0" /><path d="M1 2H31V12H1Z" fill="#11151d" /><circle cx="8" cy="12" r="4" fill="#11151d" /><circle cx="25" cy="15" r="7" fill="#11151d" /><path d="M26 18H29V31H15L18 26L16 24L20 20L22 26Z" fill="#0b1018" />
          <text x="16" y="10.500" textAnchor="middle" fontFamily="Open Sans" fontSize="9" textLength="21" fill="#f09a2a">kindle</text>
        </Slot>
        <Slot><rect x="1" y="1" width="30" height="30" fill="#058a05" /><path d="M5 11H26L25 27H7Z" fill="#fff" /><path d="M10 13V7Q10 4 14 4Q18 4 18 7V11M13 11V7Q14 5 20 5Q23 6 23 12" stroke="#fff" strokeWidth="1.300" /><path d="M10 15L15 14.500V19H10ZM16 14.400L22 14V19H16ZM10 20H15V24.500L10 24ZM16 20H22V25L16 24.600Z" fill="#058a05" /></Slot>
        <Slot state="open">
          <circle cx="16" cy="16" r="14" fill="#e8c532" /><path d="M16 16L4 9A14 14 0 0 1 28.500 10H16Z" fill="#d93a2b" /><path d="M16 16L16 30A14 14 0 0 1 4 9L10 18Z" fill="#43a047" /><path d="M4 9A14 14 0 0 1 28.500 10H16A6 6 0 0 0 10 17Z" fill="#d93a2b" /><circle cx="16" cy="16" r="6.500" fill="#eef2f5" /><circle cx="16" cy="16" r="5" fill="#3275c4" />
        </Slot>
        <Slot>
          <defs><linearGradient id="st" x1="0" y1="0" x2="0" y2="1"><stop offset="0" stopColor="#0b1a38" /><stop offset="1" stopColor="#1b6ea8" /></linearGradient></defs>
          <circle cx="16" cy="16" r="14.500" fill="url(#st)" /><path d="M2 15L13 20L18 14L24 17L14 25L3 20Z" fill="#fff" /><circle cx="21.500" cy="12" r="5" fill="#122d50" stroke="#fff" strokeWidth="1.500" /><circle cx="21.500" cy="12" r="2.500" stroke="#fff" strokeWidth="1.200" /><circle cx="12" cy="21.500" r="3.300" stroke="#fff" strokeWidth="1.500" fill="#1a5382" />
        </Slot>
        <Slot><path d="M30 2.500H16A13 13 0 0 0 3 16Q3 27 14 29" stroke="#181818" strokeWidth="4" strokeLinecap="round" /><path d="M16 14H31V31H27V22Q27 18.500 23 18.500H18Z" fill="#181818" /></Slot>
        <Slot><path d="M5 4L17 8L14 24L0 18Z" fill="#7cc46a" /><path d="M9 9L24 9L21 27L7 24Z" fill="#a9d8f8" /><path d="M12 12L28 7L32 22L16 28Z" fill="#fbe36c" stroke="#d8bc3c" strokeWidth=".6" /></Slot>
        <Slot state="open"><rect width="32" height="32" fill="#f3eeea" /><path d="M0 20Q16 12 32 18V32H0Z" fill="#e8cdb8" /><path d="M9 3H23V8H19V20H23V25H9V20H13V8H9Z" fill="#dd7620" /><path d="M13 8L19 13V8ZM13 20L19 15V20Z" fill="#a84f10" /><rect x="18" y="25" width="14" height="7" fill="#f5f5f5" /><text x="19" y="30.500" fontFamily="Liberation Sans" fontWeight="700" fontSize="6.500" textLength="11.500" lengthAdjust="spacingAndGlyphs" fill="#333">PRO</text></Slot>
        <Slot state="active"><rect width="32" height="32" fill="#f6f0f0" /><path d="M0 20Q16 10 32 18V32H0Z" fill="#e6b4b6" /><path d="M16 3L6 22Q8 25 11 24L12 21H20L21 24Q24 25 26 22Z" fill="#c2151c" /><path d="M16 3L26 22Q24 25 21 24L15 12Z" fill="#8f0e13" /></Slot>
      </div>
      <div className="relative flex items-start">
        <Svg w={115} h={38} vb="1168 729 115 38">
          <path d="M1172 750.500H1179L1175.500 746.500Z" fill="#fff" />
          <rect x="1194.500" y="741" width="11" height="15.500" rx="5" fill="#0d3d7c" /><path d="M1197 745.500L1203 751.500L1200 754V743L1203 745.700L1197 751.500" stroke="#fff" />
          <path d="M1223.500 743.500H1230.500V756.500H1223.500ZM1225 742H1229" stroke="#fff" strokeWidth="1.300" /><rect x="1225" y="749" width="4" height="6" fill="#fff" />
          <path d="M1242.500 752V754M1245 751V754M1248 748.500V754M1251 746V754M1254 743.500V754" stroke="#fff" strokeWidth="2" />
          <path d="M1267 746.500H1269.500L1272.500 743.500V754.500L1269.500 751.500H1267Z" fill="#fff" stroke="#fff" strokeWidth=".8" /><path d="M1275 746Q1277 749 1275 752M1277 744.500Q1280 749 1277 753.500" stroke="#ddd" />
        </Svg>
        <div className="flex w-[80px] flex-col items-center pt-[4px] text-[12px] leading-[16px] tracking-[-0.55px] text-white">
          <span>10:47 PM</span>
          <span>3/19/2015</span>
        </div>
        <div className="w-[3px]" />
      </div>
    </div>
  );
}

export default function App() {
  return (
    <div className="flex h-[768px] w-[1366px] flex-col overflow-hidden bg-[#ebebeb] font-['Open_Sans','Noto_Sans',sans-serif]">
      <div className="relative h-[728px]">
        <svg width="1366" height="728" viewBox="0 0 1366 728" className="absolute inset-0">
          <path d="M0 23H2V46H0Z" fill="#1979ca" /><path d="M0 46H2V728H0Z" fill="#fff" /><path d="M0 4H2V18H0Z" fill="#f2ee8a" />
          <path d="M229 0H308V2H229Z" fill="#f2ee8a" />
          <path d="M2.500 728V2.500H1363.500V728" stroke="#cfcfcf" fill="none" />
          <path d="M1364 23H1366V728H1364Z" fill="#fff" />
          <path d="M9.500 34V720.500H1356.500V34" stroke="#d8d8d8" fill="none" />
          <path d="M1318 0H1363V2H1318Z" fill="#bcbcbc" />
        </svg>
        <div className="relative flex flex-col">
          <TitleBar />
          <div className="ml-[10px] flex w-[1346px] flex-col">
            <RibbonTabs />
            <div className="flex h-[99px] border-t border-b border-l border-t-[#2a2a2a] border-b-[#8a8a8a] border-l-[#3b3b3b] bg-[#5c5c5c]">
              <TextPanel />
              <DimPanel />
              <LeaderPanel />
              <TablePanel />
              <MarkupPanel />
              <ScalePanel />
            </div>
            <DocTabs />
            <div className="relative h-[508px] bg-[#212830]">
              <Drawing />
              <ViewControls />
            </div>
            <StatusBar />
          </div>
        </div>
      </div>
      <Taskbar />
    </div>
  );
}
